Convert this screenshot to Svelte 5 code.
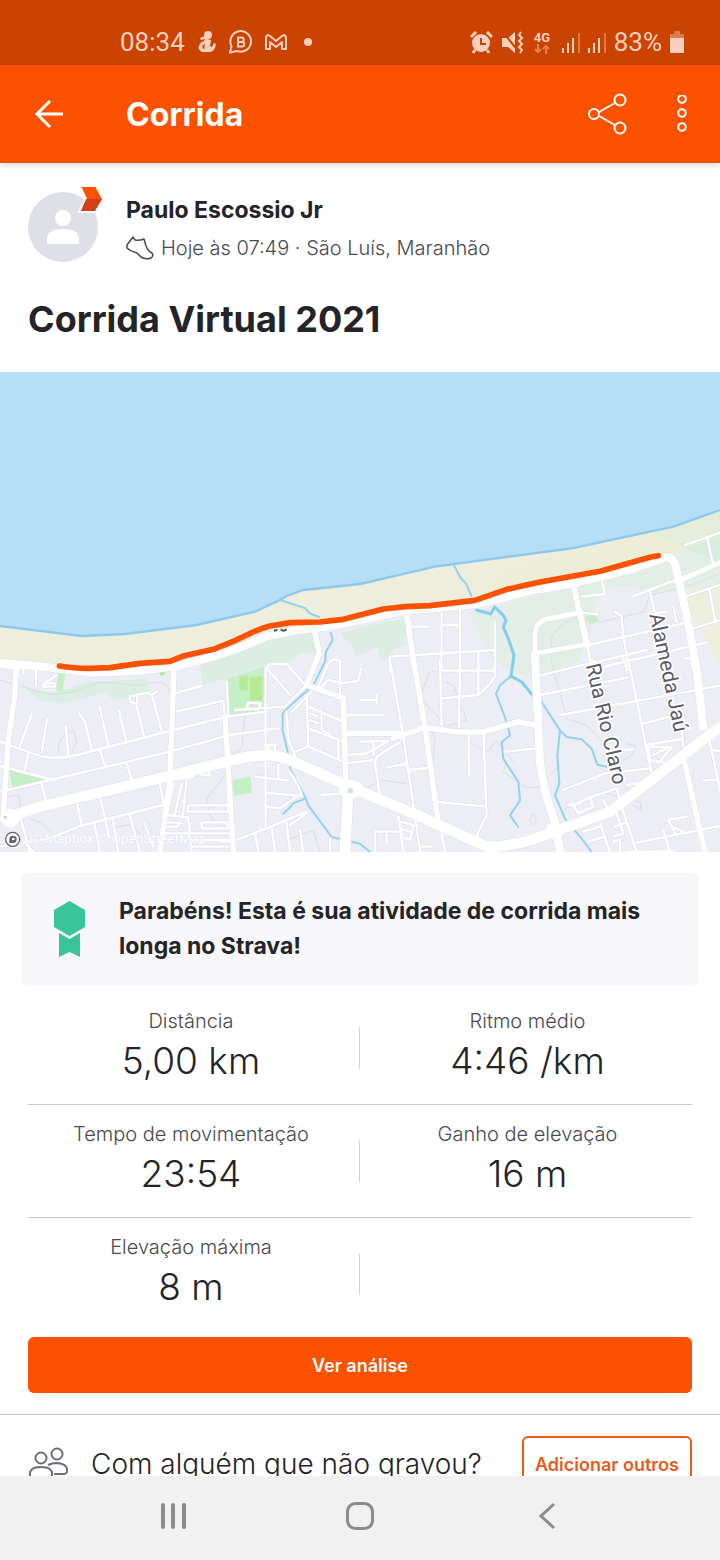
<script>
    const stats = [
        [
            { label: "Distância", value: "5,00 km" },
            { label: "Ritmo médio", value: "4:46 /km" },
        ],
        [
            { label: "Tempo de movimentação", value: "23:54" },
            { label: "Ganho de elevação", value: "16 m" },
        ],
        [{ label: "Elevação máxima", value: "8 m" }],
    ];

    const coast = "M0 762L245 792L375 786L590 759L765 719L840 684L860 672L910 654L1080 636L1305 584L1720 528L2020 464L2160 414";

    // roads, grouped by stroke width; each group is drawn twice: casing, then white
    const roads = [
        {
            x: 0, y: 864, width: 7, paths: [
                "M0 245L35 258L120 288Q170 300 230 285L510 213L680 170L800 155M60 258L95 162M125 278L141 178M205 285L197 198M275 270L255 185L238 160M325 255L298 138M378 243L357 152",
                "M432 228L408 130L390 125V110L440 98L455 105L485 212M455 105L470 95M412 126V102M75 328L85 282M0 318L160 360M0 395L160 358L510 275L690 225L835 205M300 272L315 318M380 308L395 362M125 372L138 425",
                "M108 75V30M130 80V70H165V80ZM130 75L168 45M530 98L605 78M530 155L670 122L675 175M680 65L686 175M705 150L850 140M740 145L745 128L782 130L775 148ZM797 500V30Q800 12 820 12H860L915 75M800 25L870 105",
                "M0 560L150 535L240 498L490 435M232 435L245 495M302 418L328 535M283 490L300 576M338 478L355 576M388 462L420 576M432 488L460 560M60 470L90 575M70 540L100 576M480 372L492 435M520 372L500 465L565 472L575 576M545 372L525 462M560 362L548 465",
                "M498 488H540L530 500H495M565 436H685V455H562ZM605 487H682V505H605ZM490 520H685M575 540H685M575 560H685M660 545H700M590 335L625 330L628 345L600 343M710 540L800 505L920 455M765 520L775 576M815 505L825 576M850 480L860 490L870 576M900 510L910 576M990 535V576M870 495L920 460",
                "M797 398L905 408M797 440L840 445L890 410M765 350L865 362M865 330Q900 380 905 408M835 315V355M805 272V255H825V272M860 155L865 240L890 300M920 110L925 260L885 275M925 260L1030 305M925 205L1030 245M925 140L1030 185M930 160L950 168M930 180L955 190M965 165V210L990 222M1015 240V295",
                "M850 145L915 80M875 155L935 95M955 80L985 10Q1000 -10 1020 5V110M965 80L985 60L1030 70L1075 62L1083 25M1030 165H1150M1040 285L1100 280L1165 243M1040 310L1120 300M965 405L1030 400M0 20L60 28M70 40V20",
            ],
        },
        {
            x: 1080, y: 864, width: 7, paths: [
                "M90 0L130 230L165 470L180 576M0 120H50V105V130M120 245L50 290L45 308L60 410M0 245L85 243M40 245V285M80 322L138 312M145 330L200 324M115 470L130 576M45 575V515H115M80 515V550M120 485L160 495L150 540L125 530ZM130 510L155 515",
                "M240 0L245 195M300 0L297 200M355 0V105M405 0V50Q380 90 350 105L250 115M250 32H405M325 215L328 350M370 215L380 470Q365 490 350 530M235 426L378 440M245 520L255 576M180 560H215M435 275L530 265",
                "M540 46L690 10L860 -30M540 105L805 52M600 165L1000 92L1060 80M700 0L712 20M805 0L875 340M850 190L970 160M855 255L965 237M770 270L820 268M610 390L735 340L870 325M800 375L885 362M865 265L870 300L930 310M870 260L935 262L895 310M880 285L920 265",
                "M640 435L690 412L700 440L655 460ZM625 435L660 430M690 412L770 385L785 440L830 576M730 420L740 440M830 548L1080 498M910 512L930 576M925 480L980 470M925 480L945 520M935 500L970 515M670 515L720 500M685 545L735 530M720 490L750 576M765 500L800 488M770 460L790 520L760 530M760 545L780 540V576M800 576L940 572",
                "M965 205L970 260M1045 225L1080 390M1030 362L1075 358M1055 270L1090 275M1060 80L1095 75M0 285L20 280",
            ],
        },
        {
            x: 1080, y: 354, width: 7, paths: [
                "M245 370V540M300 355V540M245 405H300M155 410H205M405 395V540M90 540V500L405 480M355 485V540M665 320L735 312L725 268M660 368L715 373M685 465L970 400M690 540L1040 457M680 460L695 530M765 365L785 380L790 440L808 540M818 320L1080 218M870 305L885 370M885 370L920 365M940 350L950 395",
                "M975 165L1080 128M1042 145L1058 220M980 318L1080 285M1048 298L1065 390M1000 415L1080 390M975 505H990L1000 540M790 500L800 540",
            ],
        },
        {
            x: 0, y: 864, width: 16, paths: [
                "M48 20L45 100L25 240L10 460M522 20L515 220L510 340M510 360L480 576M675 170L685 330L700 576M945 -80L958 -20L920 75L1030 115L1038 380M1035 220H1200",
            ],
        },
        {
            x: 1080, y: 864, width: 16, paths: [
                "M140 -140L160 0L195 200L235 490M100 235L195 202L280 215L370 216L475 185L535 198M640 -225L680 -45M970 290L1035 576",
            ],
        },
        {
            x: 1080, y: 354, width: 14, paths: [
                "M525 490L685 462M525 540V440Q525 390 570 385L660 368M960 272L1080 218M140 370L165 540M640 285L685 465",
            ],
        },
        {
            x: 0, y: 0, width: 24, paths: [
                "M0 872L130 884L280 902L420 896L530 882L640 854L720 827L800 793L900 773L1000 761L1080 744L1220 716L1430 696L1580 659L1720 634L1880 595L1980 562Q2012 545 2025 575L2065 754L2090 894L2110 1064",
                "M1605 850L1620 1170Q1630 1260 1665 1350L1680 1440",
            ],
        },
        {
            x: 0, y: 864, width: 32, paths: [
                "M15 475L120 440L500 350L680 305Q800 270 870 300L1060 385L1240 460L1460 560Q1560 560 1660 515L1830 455L1980 340L2160 200",
                "M1045 385L1035 576M495 350L570 340",
            ],
        },
    ];

    const streams = [
        "M840 684L915 708L930 725L958 735",
        "M1362 580L1380 615L1398 635L1414 672",
        "M992 782L998 804L978 839L975 869L940 940L860 1010L848 1025V1075L868 1160L870 1190L915 1275L925 1300L995 1395L1080 1415L1110 1440",
        "M915 1280L880 1294L868 1308L850 1325",
        "M1530 915L1500 940L1488 965L1520 1050L1530 1090L1505 1110L1510 1160L1555 1230L1560 1285L1530 1330L1555 1365",
        "M1625 990L1680 1075L1700 1095L1745 1102L1775 1130L1792 1178L1820 1184",
        "M1680 1075L1672 1150L1678 1235L1665 1270L1695 1340L1745 1400L1775 1440",
    ];

    const bigStream = "M1430 714L1472 726L1484 705L1510 730L1518 746L1510 765L1525 800L1542 850L1533 912L1565 930L1600 972";

    const trails = [
        "M0 925L80 948L150 968L220 960L300 930L420 940Q500 915 508 955M175 1140Q170 1090 220 1075L230 1110L210 1150M20 1275L55 1270L65 1315M90 1340L120 1350L150 1380M345 1365L390 1358L420 1385M705 1010L735 1030L725 1130L695 1148M670 1215L620 1280L630 1330L660 1365M870 1400L940 1376L960 1440",
        "M1265 960L1290 900L1325 895M1335 930L1360 940L1400 1045L1340 1062L1290 1010L1265 980M1375 1070Q1430 1140 1465 1135L1490 1108L1540 1170M1620 1245L1580 1247L1510 1200L1520 1170M1300 1160L1305 1100L1290 1060M1080 1255L1150 1225L1220 1235",
        "M1655 800Q1660 770 1720 740L1800 750L1930 720L1950 670L2070 640L2160 605M1655 800V870L1700 1040L1760 1060L1810 1110M1880 1115L1905 1120L1895 1150L1860 1170M1600 1324L1610 1340L1600 1360L1590 1345ZM1640 1220L1680 1180M1695 1310L1800 1260L1920 1290L1925 1315L1900 1300",
    ];
</script>

<div class="screen">
    <div class="status">
        <div class="group">
            <span class="clock">08:34</span>
            <svg width="20" height="24" viewBox="0 0 20 24" fill="currentColor">
                <circle cx="11" cy="5" r="4" />
                <path d="M3 8L8 6L10 9L14 10L13 16L15 17L17 13L19 14Q18 21 13 22H5Q0 19 2 16Q3 12 7 11L8 9L4 10Z" />
                <path d="M5 16L8 14L7 20Z" fill="#cb4300" />
            </svg>
            <svg width="24" height="24" viewBox="0 0 24 24" fill="none" stroke="currentColor" stroke-width="2">
                <path d="M1 22.500L2.500 16A10.300 10.300 0 1 1 8 21Z" />
                <path d="M9 7.500H12.500A2.200 2.200 0 0 1 12.500 12H9ZM9 12H13A2.200 2.200 0 0 1 13 16.500H9Z" />
            </svg>
            <svg width="22" height="17" viewBox="0 0 22 17" fill="none" stroke="currentColor" stroke-width="2" stroke-linejoin="round">
                <path d="M1 15V3Q2 0 5 2L11 7L17 2Q20 0 21 3V15H17V8L11 13L5 8V15Z" />
            </svg>
            <span class="dot"></span>
        </div>
        <div class="group right">
            <svg width="23" height="23" viewBox="0 0 23 23">
                <circle cx="11" cy="12" r="9" fill="currentColor" />
                <path d="M1 6L6 1M17 1L22 6M5 19L3 22M17 19L19 22" fill="none" stroke="currentColor" stroke-width="3" />
                <path d="M11 7V13H16" fill="none" stroke="#cb4300" stroke-width="2" />
            </svg>
            <svg width="23" height="23" viewBox="0 0 23 23">
                <path d="M1 7H7L14 1V22L7 16H1Z" fill="currentColor" />
                <path d="M1 0L18 21" stroke="#cb4300" stroke-width="2" />
                <path d="M20 1L18 4L21 7L18 10L21 13L18 16L21 19L19 22" fill="none" stroke="currentColor" stroke-width="2" />
            </svg>
            <span class="network">
                4G
                <svg width="16" height="10" viewBox="0 0 16 10" fill="none" stroke="#e2804f" stroke-width="2">
                    <path d="M4 0V8M1 5L4 8L7 5M12 10V2M9 5L12 2L15 5" />
                </svg>
            </span>
            {#each [1, 2] as sim}
                <svg width="18" height="21" viewBox="0 0 18 21" fill="currentColor">
                    <path d="M0 16H2V21H0ZM5 11H7V21H5ZM10 6H12V21H10Z" />
                    <path d="M16 1H18V21H16Z" opacity=".4" />
                </svg>
            {/each}
            <span class="clock">83%</span>
            <svg width="14" height="22" viewBox="0 0 14 22" fill="currentColor">
                <path d="M4 0H10V3H14V7H0V3H4Z" opacity=".4" />
                <path d="M0 7H14V22H0Z" />
            </svg>
        </div>
    </div>

    <header>
        <button class="icon" aria-label="Voltar">
            <svg width="30" height="30" viewBox="0 0 30 30" fill="none" stroke="currentColor" stroke-width="3">
                <path d="M29 15H3M16 2L3 15L16 28" />
            </svg>
        </button>
        <h1>Corrida</h1>
        <button class="icon" aria-label="Compartilhar">
            <svg width="40" height="42" viewBox="0 0 40 42" fill="none" stroke="currentColor" stroke-width="2">
                <circle cx="6" cy="21" r="5" />
                <circle cx="32" cy="7" r="5.500" />
                <circle cx="32" cy="35" r="5.500" />
                <path d="M11 19L27 10M11 23L27 32" />
            </svg>
        </button>
        <button class="icon" aria-label="Mais opções">
            <svg width="10" height="38" viewBox="0 0 10 38" fill="none" stroke="currentColor" stroke-width="2">
                <circle cx="5" cy="4" r="3.800" />
                <circle cx="5" cy="18" r="3.800" />
                <circle cx="5" cy="32" r="3.800" />
            </svg>
        </button>
    </header>

    <main>
        <div class="profile">
            <svg class="avatar" width="78" height="78" viewBox="0 0 78 78">
                <circle cx="35" cy="43" r="35" fill="#dfdfe8" />
                <circle cx="35" cy="34" r="8" fill="#fff" />
                <path d="M19 60V54Q20 45 35 45Q50 45 51 54V60Z" fill="#fff" />
                <path d="M52 2H68L75 15L67 28H51L58 15Z" fill="#fc5200" stroke="#fff" stroke-width="2" />
                <path d="M58 15H74L67 27H53Z" fill="#d0401b" />
            </svg>
            <div class="who">
                <h2>Paulo Escossio Jr</h2>
                <p class="meta">
                    <svg width="28" height="24" viewBox="0 0 28 24" fill="none" stroke="currentColor" stroke-width="1.500" stroke-linejoin="round">
                        <path d="M1 9L7 1L9 4Q13 5 18 3L20 10Q22 15 26 17Q28 20 25 22Q20 24 15 21L11 17Q4 15 1 12Z" />
                    </svg>
                    Hoje às 07:49 · São Luís, Maranhão
                </p>
            </div>
        </div>
        <h3>Corrida Virtual 2021</h3>

        <svg class="map" viewBox="0 0 2160 1440" role="img" aria-label="Mapa do percurso">
            <rect width="2160" height="1440" fill="#ededf6" />
            <path d="{coast}V880L1980 560L1430 700L900 780L530 890L0 870Z" fill="#eeeedd" />
            <path d="M1500 600L2020 464L2160 414V620L1980 560L1430 700Z" fill="#eeedd5" />
            <path d="M1950 480L2020 464L2160 414V620H2040L1990 560L2060 530Z" fill="#e3edda" />
            <path d="M1405 720L1720 645L1990 560L2060 530L2160 545V640L1950 670Q1900 630 1840 645Q1770 680 1790 740L1740 860Q1680 920 1570 910L1480 870Z" fill="#e3eee6" />
            <path d="M2060 530L2160 495V570Z" fill="#d6eedb" />
            <path d="M600 869L800 800L940 782L955 844H900L865 869L608 939Z" fill="#dceee4" />
            <path d="M1020 784L1130 754L1220 739L1215 819L1185 829L1160 862L1140 859L1137 824L1070 854L1055 819Z" fill="#dceee4" />
            <path d="M65 942L150 962L205 950L260 930L440 920L450 965L340 988L320 960L190 995L120 985Z" fill="#dceee4" />
            <path d="M175 905L197 902L187 960L168 955ZM680 920L795 885L790 1020L690 1028ZM27 1188L145 1220L38 1252ZM698 1225L752 1215L755 1262L703 1272ZM1755 735L1785 725L1795 745L1770 755Z" fill="#c5efc5" />
            <path d="M478 897L492 892L496 907L482 912ZM718 915L743 910V955H718ZM750 917L787 912V985H750Z" fill="#b8ea93" />
            <path d="{coast}V0H0Z" fill="#b5dff7" />
            <path d={coast} fill="none" stroke="#8fc8e9" stroke-width="7" />

            <g fill="none" stroke-linecap="round" stroke-linejoin="round">
                {#each trails as d}
                    <path {d} stroke="#dcdce1" stroke-width="3" />
                {/each}
                {#each streams as d}
                    <path {d} stroke="#93d2ef" stroke-width="6" />
                {/each}
                <path d={bigStream} stroke="#82cdef" stroke-width="9" />
                {#each roads as group}
                    <g transform="translate({group.x} {group.y})" stroke="#e2e2ec" stroke-width={group.width + 4}>
                        {#each group.paths as d}
                            <path {d} />
                        {/each}
                    </g>
                {/each}
                {#each roads as group}
                    <g transform="translate({group.x} {group.y})" stroke="#fff" stroke-width={group.width}>
                        {#each group.paths as d}
                            <path {d} />
                        {/each}
                    </g>
                {/each}
            </g>
            <ellipse cx="1053" cy="1252" rx="36" ry="28" fill="#fff" />
            <ellipse cx="1665" cy="1375" rx="28" ry="26" fill="#fff" />
            <circle cx="30" cy="1338" r="28" fill="#fff" />
            <circle cx="1051" cy="1256" r="8" fill="#d0e0df" />
            <circle cx="16" cy="1336" r="5" fill="#cfd2dc" />
            <path d="M822 776L832 774M842 772Q850 780 860 772" fill="none" stroke="#555" stroke-width="6" />
            <path
                class="route"
                d="M178 882Q230 890 270 889L330 887L420 874L510 868L550 852L640 832L705 806L740 789Q780 769 810 762L870 752L960 750L1030 742L1080 729L1150 711L1215 704L1290 701L1425 685L1520 652L1620 630L1800 598L1950 556L1975 551"
            />
            <text class="street" transform="translate(1757 880) rotate(77)">Rua Rio Claro</text>
            <text class="street" transform="translate(1948 728) rotate(78)">Alameda Jaú</text>
            <text class="credit" x="92" y="1413">© Mapbox © OpenStreetMap</text>
            <circle cx="38" cy="1402" r="21" fill="#fff" stroke="#62626c" stroke-width="4" />
            <path d="M28 1413V1402A11 11 0 1 1 39 1413Z" fill="#62626c" />
            <circle cx="40" cy="1401" r="4" fill="#fff" />
        </svg>

        <div class="banner">
            <svg width="31" height="57" viewBox="0 0 31 57" fill="#38c698">
                <path d="M15.500 0L31 9V26L15.500 35L0 26V9Z" />
                <path d="M5 32L15.500 38L26 32V56L15.500 51L5 56Z" />
            </svg>
            <p>Parabéns! Esta é sua atividade de corrida mais longa no Strava!</p>
        </div>

        <div class="stats">
            {#each stats as row}
                <dl>
                    {#each row as item}
                        <div>
                            <dt>{item.label}</dt>
                            <dd>{item.value}</dd>
                        </div>
                    {/each}
                </dl>
            {/each}
        </div>

        <button class="primary">Ver análise</button>

        <div class="others">
            <svg width="40" height="40" viewBox="0 0 40 40" fill="none" stroke="#6d6d78" stroke-width="2">
                <circle cx="13" cy="14" r="5.500" />
                <circle cx="29" cy="10" r="5.500" />
                <path d="M2 31Q1 23 13 23Q25 23 24 31Q24 35 20 35H6Q2 35 2 31ZM20 21Q24 19 29 19Q40 20 39 27Q39 30 35 30H26" />
            </svg>
            <span>Com alguém que não gravou?</span>
            <button class="outline">Adicionar outros</button>
        </div>
    </main>

    <nav>
        <button class="icon" aria-label="Recentes">
            <svg width="28" height="28" viewBox="0 0 28 28" stroke="currentColor" stroke-width="4" stroke-linecap="round">
                <path d="M4 3V25M14 3V25M25 3V25" />
            </svg>
        </button>
        <button class="icon" aria-label="Início">
            <svg width="28" height="28" viewBox="0 0 28 28" fill="none" stroke="currentColor" stroke-width="3">
                <rect x="1.500" y="1.500" width="25" height="25" rx="8" />
            </svg>
        </button>
        <button class="icon" aria-label="Voltar">
            <svg width="28" height="28" viewBox="0 0 28 28" fill="none" stroke="currentColor" stroke-width="3">
                <path d="M21 2L8 14L21 26" />
            </svg>
        </button>
    </nav>
</div>

<style>
    :global(body) {
        margin: 0;
        background: #fff;
    }
    .screen {
        height: 100vh;
        display: flex;
        flex-direction: column;
        font-family: Inter, "Liberation Sans", sans-serif;
        color: #242428;
    }
    h1, h2, h3, p, dl, dd {
        margin: 0;
    }
    svg {
        display: block;
        flex: none;
    }
    button {
        font-family: inherit;
        cursor: pointer;
    }
    .icon {
        padding: 0;
        border: 0;
        background: none;
        color: inherit;
    }

    .status {
        height: 65px;
        flex: none;
        box-sizing: border-box;
        padding: 18px 36px 0 120px;
        display: flex;
        justify-content: space-between;
        background: #cb4300;
        color: #f6cfbd;
        font-family: Roboto, sans-serif;
    }
    .group {
        height: 48px;
        display: flex;
        align-items: center;
        gap: 12px;
    }
    .right {
        gap: 8px;
    }
    .clock {
        font-size: 26px;
    }
    .dot {
        width: 8px;
        height: 8px;
        margin-left: 5px;
        border-radius: 50%;
        background: currentColor;
    }
    .network {
        width: 20px;
        margin-left: 2px;
        font-size: 13px;
        line-height: 13px;
        font-weight: bold;
    }

    header {
        height: 98px;
        flex: none;
        box-sizing: border-box;
        padding: 0 33px 0 34px;
        display: flex;
        align-items: center;
        background: #fc5200;
        color: #fff;
        box-shadow: 0 2px 6px rgba(0, 0, 0, 0.15);
        z-index: 1;
    }
    h1 {
        flex: 1;
        margin-left: 62px;
        font-size: 32px;
        font-weight: 700;
    }
    header .icon:last-child {
        margin-left: 49px;
    }

    main {
        flex: 1;
        min-height: 0;
        overflow-y: auto;
        scrollbar-width: none;
    }
    .profile {
        padding: 21px 28px 0;
        display: flex;
        gap: 20px;
    }
    .who {
        padding-top: 10px;
    }
    h2 {
        font-size: 23px;
        line-height: 32px;
        font-weight: 700;
    }
    .meta {
        margin-top: 4px;
        display: flex;
        align-items: center;
        gap: 7px;
        font-size: 20px;
        line-height: 36px;
        font-weight: 300;
        color: #494950;
    }
    h3 {
        padding: 28px;
        font-size: 36px;
        line-height: 50px;
        font-weight: 700;
    }
    .map {
        width: 100%;
    }
    .route {
        fill: none;
        stroke: #fc5200;
        stroke-width: 17;
        stroke-linecap: round;
        stroke-linejoin: round;
    }
    .street {
        font-family: Roboto, sans-serif;
        font-size: 62px;
        fill: #5b5b63;
        stroke: #fff;
        stroke-width: 10;
        paint-order: stroke;
    }
    .credit {
        font-family: Roboto, sans-serif;
        font-size: 41px;
        fill: #fff;
        stroke: #dedee8;
        stroke-width: 2;
        paint-order: stroke;
    }

    .banner {
        margin: 21px 21px 7px;
        padding: 21px 33px;
        display: flex;
        align-items: center;
        gap: 34px;
        border-radius: 6px;
        background: #f7f7fa;
        font-size: 23px;
        line-height: 35px;
        font-weight: 700;
    }
    .stats {
        margin: 0 28px;
    }
    dl {
        position: relative;
        padding: 15px 0 19px;
        display: grid;
        grid-template-columns: 1fr 1fr;
        border-bottom: 1px solid #c8c8cb;
        text-align: center;
    }
    dl:last-child {
        border-bottom: 0;
    }
    /* short rule between the two columns */
    dl::after {
        content: "";
        position: absolute;
        top: 35px;
        right: 50%;
        height: 42px;
        border-left: 1px solid #d4d4d8;
    }
    dl div:first-child {
        padding-right: 6px;
    }
    dl div:last-child:not(:first-child) {
        padding-left: 3px;
    }
    dt {
        margin-bottom: 2px;
        font-size: 20px;
        line-height: 28px;
        font-weight: 300;
        color: #494950;
    }
    dd {
        font-size: 37px;
        line-height: 48px;
        font-weight: 300;
    }
    .primary {
        display: block;
        width: calc(100% - 56px);
        height: 56px;
        margin: 7px 28px 21px;
        border: 0;
        border-radius: 6px;
        background: #fc5200;
        color: #fff;
        font-size: 18px;
        font-weight: 600;
    }
    .others {
        padding: 21px 28px;
        display: flex;
        align-items: center;
        gap: 23px;
        border-top: 1px solid #c8c8cb;
        font-size: 28px;
        font-weight: 300;
    }
    .others span {
        flex: 1;
        white-space: nowrap;
    }
    .outline {
        width: 170px;
        height: 56px;
        padding: 0;
        border: 2px solid #ea5a1c;
        border-radius: 6px;
        background: #fff;
        color: #ea5a1c;
        font-size: 18px;
        font-weight: 600;
        white-space: nowrap;
    }

    nav {
        height: 84px;
        flex: none;
        box-sizing: border-box;
        padding: 0 80px 4px;
        display: flex;
        align-items: center;
        background: #f1f1f1;
        color: #8c8c8c;
    }
    nav .icon {
        flex: 1;
        display: flex;
        justify-content: center;
    }
</style>
